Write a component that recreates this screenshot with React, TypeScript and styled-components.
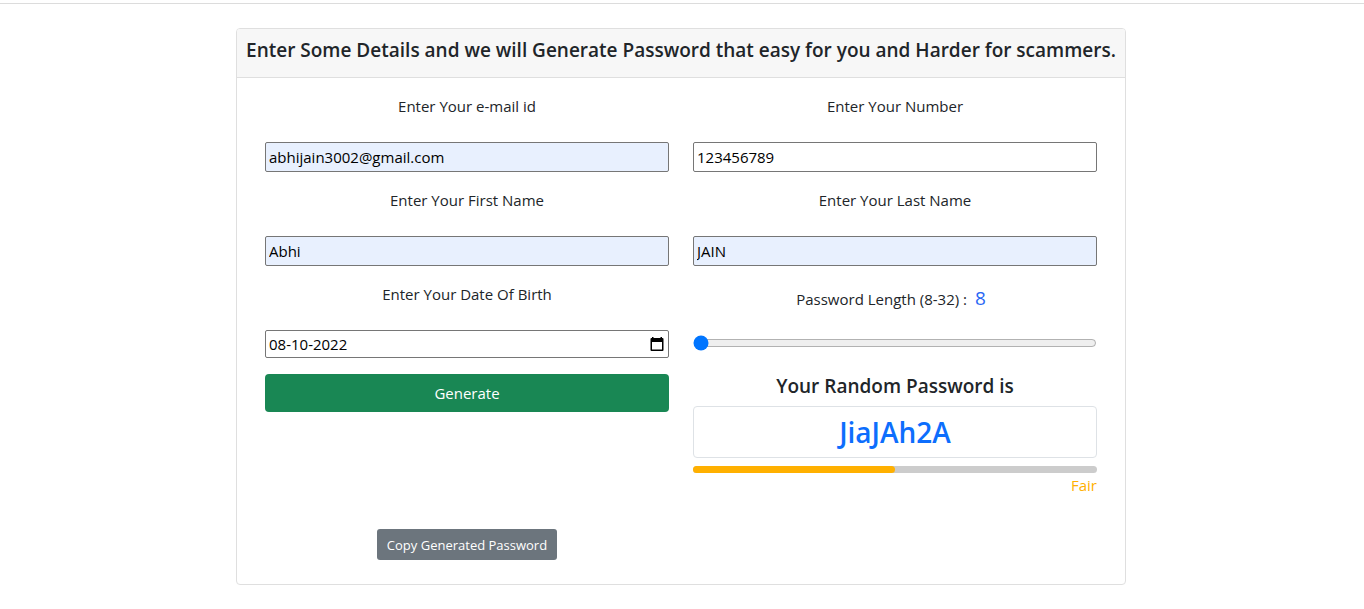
import React, { useState } from "react";
import styled, { createGlobalStyle } from "styled-components";

const GlobalStyle = createGlobalStyle`
  *, *::before, *::after { box-sizing: border-box; }
  body {
    margin: 0;
    background: #fff;
    color: #212529;
    font-family: "Segoe UI", "Open Sans", "Noto Sans", sans-serif;
    font-size: 15px;
    line-height: 24px;
  }
  button, input { font: inherit; }
`;

const TopBar = styled.header`
  height: 4px;
  border-bottom: 1px solid #dcdcdc;
`;

const Page = styled.main`
  display: flex;
  justify-content: center;
  padding: 24px 18px 24px 16px;
`;

const Card = styled.section`
  width: 100%;
  max-width: 890px;
  border: 1px solid #dfdfdf;
  border-radius: 4px;
`;

const CardHeader = styled.header`
  padding: 9px 4px 15px;
  background: #f7f7f7;
  border-bottom: 1px solid #dfdfdf;
  border-radius: 3px 3px 0 0;
`;

const Heading = styled.h5`
  margin: 0;
  font-size: 19px;
  font-weight: 600;
  line-height: 24px;
  text-align: center;
`;

const CardBody = styled.form`
  padding: 16px 28px 24px;
`;

const Columns = styled.div`
  display: grid;
  grid-template-columns: 1fr 1fr;
  gap: 16px 24px;
`;

const Field = styled.div`
  display: flex;
  flex-direction: column;
  gap: 24px;
`;

const SliderField = styled(Field)`
  gap: 20px;
`;

const Label = styled.label`
  text-align: center;
`;

const LengthLabel = styled(Label)`
  padding-right: 8px;
  line-height: 32px;
`;

const LengthValue = styled.output`
  margin-left: 4px;
  color: #2a68f5;
  font-size: 19px;
`;

const TextInput = styled.input<{ $filled?: boolean; $compact?: boolean }>`
  width: 100%;
  height: ${(p) => (p.$compact ? 28 : 30)}px;
  padding: 1px 3px;
  border: 1px solid #767676;
  border-radius: 2px;
  background: ${(p) => (p.$filled ? "#e8f0fe" : "#fff")};
  color: #000;
`;

const DateBox = styled.div`
  position: relative;
  display: flex;
`;

const CalendarButton = styled.button`
  position: absolute;
  top: 0;
  right: 2px;
  display: flex;
  align-items: center;
  height: 100%;
  padding: 0 3px;
  border: 0;
  background: none;
`;

const Slider = styled.input`
  width: 100%;
  height: 16px;
  margin: 0;
`;

const Button = styled.button`
  border: 0;
  color: #fff;
`;

const GenerateButton = styled(Button)`
  align-self: start;
  height: 38px;
  border-radius: 4px;
  background: #198754;
`;

const CopyButton = styled(Button)`
  height: 31px;
  padding: 0 10px;
  border-radius: 3px;
  background: #6c757d;
  font-size: 13px;
`;

const Result = styled.div`
  display: flex;
  flex-direction: column;
`;

const PasswordBox = styled.div`
  margin: 8px 0;
  border: 1px solid #dee2e6;
  border-radius: 4px;
  color: #0d6efd;
  font-size: 28px;
  font-weight: 600;
  line-height: 50px;
  text-align: center;
`;

const Meter = styled.div`
  height: 7px;
  border-radius: 4px;
  background: #ccc;
`;

const MeterFill = styled.div`
  height: 100%;
  border-radius: 4px;
  background: #ffb000;
`;

const Strength = styled.span`
  color: #ffb000;
  text-align: right;
`;

const Actions = styled.div`
  display: grid;
  grid-template-columns: 1fr 1fr;
  justify-items: center;
  column-gap: 24px;
  padding-top: 32px;
`;

const textFields = [
  { id: "email", label: "Enter Your e-mail id", type: "email", value: "abhijain3002@gmail.com", filled: true },
  { id: "number", label: "Enter Your Number", type: "tel", value: "123456789", filled: false },
  { id: "first", label: "Enter Your First Name", type: "text", value: "Abhi", filled: true },
  { id: "last", label: "Enter Your Last Name", type: "text", value: "JAIN", filled: true },
];

function CalendarIcon() {
  return (
    <svg width="14" height="16" viewBox="0 0 14 16" aria-hidden="true">
      <path
        fill="#000"
        fillRule="evenodd"
        d="M2 1h1.500v1h7V1H12v1h.5A1 1 0 0 1 13.500 3v11a1 1 0 0 1-1 1h-11a1 1 0 0 1-1-1V3a1 1 0 0 1 1-1H2zM2 6v7.500h10V6z"
      />
    </svg>
  );
}

export default function App() {
  const [length, setLength] = useState(8);
  const strength = 50;

  return (
    <>
      <GlobalStyle />
      <TopBar />
      <Page>
        <Card>
          <CardHeader>
            <Heading>Enter Some Details and we will Generate Password that easy for you and Harder for scammers.</Heading>
          </CardHeader>
          <CardBody onSubmit={(e) => e.preventDefault()}>
            <Columns>
              {textFields.map((f) => (
                <Field key={f.id}>
                  <Label htmlFor={f.id}>{f.label}</Label>
                  <TextInput id={f.id} type={f.type} defaultValue={f.value} $filled={f.filled} spellCheck={false} />
                </Field>
              ))}
              <Field>
                <Label htmlFor="dob">Enter Your Date Of Birth</Label>
                <DateBox>
                  <TextInput id="dob" type="text" defaultValue="08-10-2022" $compact />
                  <CalendarButton type="button" aria-label="Choose date">
                    <CalendarIcon />
                  </CalendarButton>
                </DateBox>
              </Field>
              <SliderField>
                <LengthLabel htmlFor="length">
                  Password Length (8-32) : <LengthValue>{length}</LengthValue>
                </LengthLabel>
                <Slider
                  id="length"
                  type="range"
                  min={8}
                  max={32}
                  value={length}
                  onChange={(e) => setLength(Number(e.target.value))}
                />
              </SliderField>
              <GenerateButton type="submit">Generate</GenerateButton>
              <Result>
                <Heading>Your Random Password is</Heading>
                <PasswordBox>JiaJAh2A</PasswordBox>
                <Meter role="progressbar" aria-label="Password strength" aria-valuenow={strength}>
                  <MeterFill style={{ width: `${strength}%` }} />
                </Meter>
                <Strength>Fair</Strength>
              </Result>
            </Columns>
            <Actions>
              <CopyButton type="button">Copy Generated Password</CopyButton>
            </Actions>
          </CardBody>
        </Card>
      </Page>
    </>
  );
}
